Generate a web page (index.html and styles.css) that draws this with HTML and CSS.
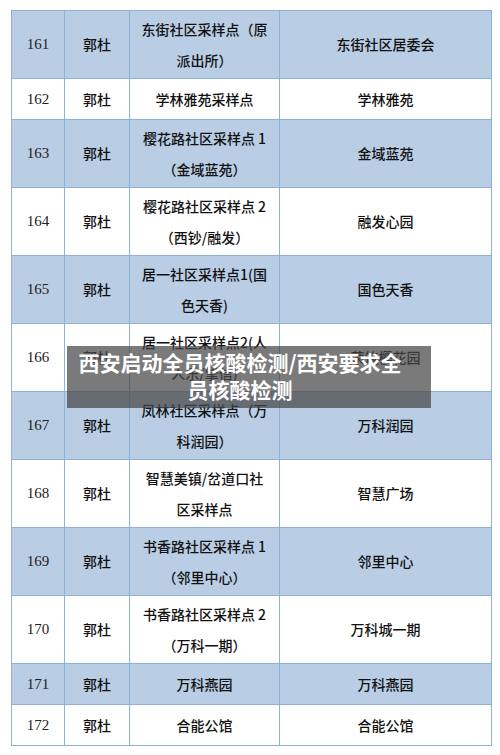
FILE: index.html
```html
<!DOCTYPE html>
<html lang="zh">
<head>
<meta charset="utf-8">
<link rel="stylesheet" href="styles.css">
</head>
<body>
<div class="page">
<table class="grid">
<colgroup><col class="c1"><col class="c2"><col class="c3"><col class="c4"></colgroup>
<tr class="tall blue"><td class="num">161</td><td>郭杜</td><td>东街社区采样点（原<br>派出所）</td><td>东街社区居委会</td></tr>
<tr class="short"><td class="num">162</td><td>郭杜</td><td>学林雅苑采样点</td><td>学林雅苑</td></tr>
<tr class="tall blue"><td class="num">163</td><td>郭杜</td><td>樱花路社区采样点 1<br>（金域蓝苑）</td><td>金域蓝苑</td></tr>
<tr class="tall"><td class="num">164</td><td>郭杜</td><td>樱花路社区采样点 2<br>（西钞/融发）</td><td>融发心园</td></tr>
<tr class="tall blue"><td class="num">165</td><td>郭杜</td><td>居一社区采样点1(国<br>色天香)</td><td>国色天香</td></tr>
<tr class="tall"><td class="num">166</td><td>郭杜</td><td>居一社区采样点2(人<br>人乐/擎信)</td><td>荣筑樱花园</td></tr>
<tr class="tall blue"><td class="num">167</td><td>郭杜</td><td>凤林社区采样点（万<br>科润园）</td><td>万科润园</td></tr>
<tr class="tall"><td class="num">168</td><td>郭杜</td><td>智慧美镇/岔道口社<br>区采样点</td><td>智慧广场</td></tr>
<tr class="tall blue"><td class="num">169</td><td>郭杜</td><td>书香路社区采样点 1<br>（邻里中心）</td><td>邻里中心</td></tr>
<tr class="tall"><td class="num">170</td><td>郭杜</td><td>书香路社区采样点 2<br>（万科一期）</td><td>万科城一期</td></tr>
<tr class="short blue"><td class="num">171</td><td>郭杜</td><td>万科燕园</td><td>万科燕园</td></tr>
<tr class="short"><td class="num">172</td><td>郭杜</td><td>合能公馆</td><td>合能公馆</td></tr>
</table>
<div class="caption">西安启动全员核酸检测/西安要求全<br>员核酸检测</div>
</div>
</body>
</html>
```
FILE: styles.css
```css
html, body {
  margin: 0;
  padding: 0;
  background: #ffffff;
}
.page {
  position: relative;
  width: 500px;
  height: 755px;
  padding: 10px 0 0 11px;
  box-sizing: border-box;
}
.grid {
  border-collapse: collapse;
  table-layout: fixed;
  width: 480px;
  font-family: "Noto Sans CJK SC", "Noto Sans", sans-serif;
  font-size: 14px;
  font-weight: 500;
  color: #111111;
}
.c1 { width: 53px; }
.c2 { width: 65px; }
.c3 { width: 150px; }
.c4 { width: 212px; }
.grid td {
  border: 1px solid #8eb1d6;
  padding: 0;
  text-align: center;
  vertical-align: middle;
  line-height: 31px;
  white-space: nowrap;
  overflow: hidden;
}
.grid .num {
  font-family: "Liberation Serif", "DejaVu Serif", serif;
  font-size: 15px;
  font-weight: 400;
  color: #222;
}
.tall { height: 68px; }
.short { height: 41px; }
.blue td { background: #b9cde5; }
.caption {
  position: absolute;
  left: 67px;
  top: 346px;
  width: 364px;
  height: 62px;
  box-sizing: border-box;
  padding: 3px 18px 0 0;
  background: rgba(70, 70, 70, 0.72);
  color: #ffffff;
  font-family: "Noto Sans CJK SC", sans-serif;
  font-weight: 700;
  font-size: 21px;
  line-height: 27px;
  text-align: center;
}
```
